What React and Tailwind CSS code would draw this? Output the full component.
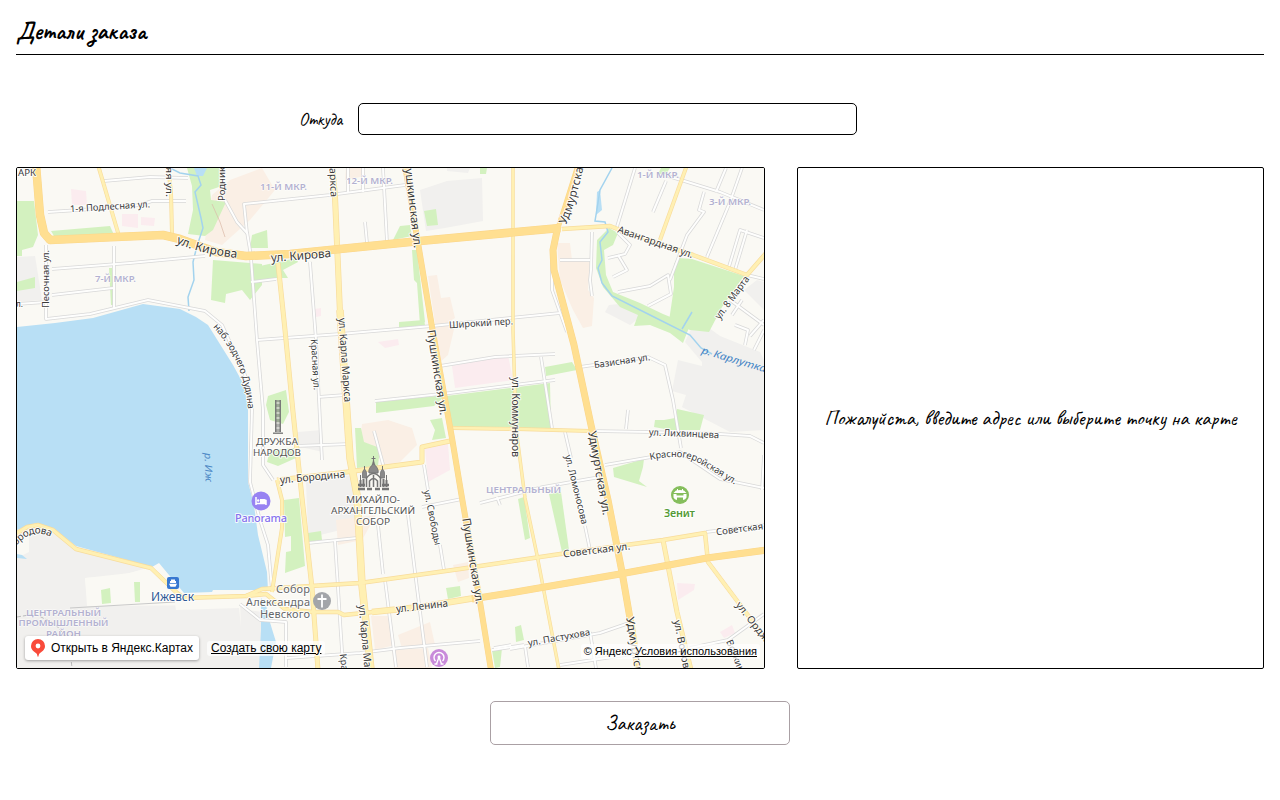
import React from "react";

const GREEN = "#d3f1bf";
const GREY = "#f1f0ee";
const PEACH = "#faefe5";
const PINK = "#fbecef";
const WATER = "#b8dff5";

const areas = [
  // industrial and built-up blocks
  [GREY, "17,257 35,256 36,262 42,300 17,302"],
  [GREY, "420,190 447,181 482,178 483,221 445,228 426,231"],
  [GREY, "447,168 470,168 468,173 447,171"],
  [GREY, "609,305 628,303 643,315 630,325 605,312"],
  [GREY, "693,325 702,323 720,336 760,352 764,360 764,430 730,432 682,407 686,395 672,391 678,360 702,366 702,362 685,342"],
  [GREY, "744,290 757,280 764,282 764,310"],
  [GREY, "298,432 322,430 323,452 296,446"],
  [GREY, "306,482 352,475 357,526 320,535 308,534"],
  [GREY, "17,532 40,525 76,548 150,567 130,573 85,578 88,606 240,605 248,610 262,612 262,668 17,668"],
  ["#faf9f4", "85,578 117,576 150,568 172,594 172,603 87,606"],
  ["#faf9f4", "175,604 240,602 241,627 239,608 176,610"],
  ["#faf9f4", "17,540 29,536 29,552 17,558"],
  // neighbourhood tints
  [PEACH, "212,195 230,180 262,168 275,190 250,220 222,245 205,240"],
  [PEACH, "428,276 437,275 441,298 450,297 455,318 436,330"],
  [PEACH, "557,243 570,243 572,260 590,262 588,290 594,298 592,326 583,328 573,310 560,280"],
  [PEACH, "362,424 388,420 412,428 417,445 400,462 384,466 372,445 360,442"],
  [PEACH, "336,520 376,515 362,540 338,545"],
  [PEACH, "453,565 468,562 469,578 458,582"],
  [PEACH, "371,616 390,616 395,645 375,650"],
  [PEACH, "398,635 430,622 435,645 402,648"],
  [PEACH, "392,650 428,648 432,668 394,668"],
  [PEACH, "434,325 455,325 448,355 437,365"],
  [PEACH, "346,168 364,168 365,176 345,180"],
  [PINK, "71,189 86,191 87,205 72,205"],
  [PINK, "122,214 138,214 138,228 122,226"],
  [PINK, "141,217 155,218 154,226 141,225"],
  [PINK, "452,366 508,355 513,380 455,388"],
  [PINK, "378,342 398,339 399,345 385,348"],
  [PINK, "425,449 448,444 450,470 428,482"],
  [PINK, "677,583 695,584 694,590 678,600"],
  [PINK, "720,632 732,625 735,633 724,638"],
  [PINK, "315,309 321,308 321,316 316,317"],
  // parks
  [GREEN, "17,201 34,201 38,235 33,247 22,250 22,256 17,256"],
  [GREEN, "17,282 35,277 35,288 17,291"],
  [GREEN, "51,231 110,226 114,235 54,236"],
  [GREEN, "187,168 220,168 222,186 210,190 211,200 226,202 213,230 205,236 188,234 193,210 192,186"],
  [GREEN, "213,260 262,264 262,285 250,300 242,290 226,294 225,303 211,300"],
  [GREEN, "252,235 267,230 268,248 250,248"],
  [GREEN, "260,266 296,258 298,262 283,270 288,278 275,278 260,280"],
  [GREEN, "109,268 112,268 115,305 111,305"],
  [GREEN, "400,226 410,225 412,236 393,240"],
  [GREEN, "412,250 417,250 425,322 420,325 417,283 414,280"],
  [GREEN, "424,211 436,209 438,225 427,226"],
  [GREEN, "480,168 487,168 486,174 480,174"],
  [GREEN, "661,168 670,168 666,174 658,174"],
  [GREEN, "609,228 618,233 613,245 604,250 606,275 613,292 640,303 663,314 690,325 683,343 670,333 650,325 634,326 638,315 620,307 603,287 596,268 597,240"],
  [GREEN, "678,258 692,259 744,276 722,307 709,332 690,330 669,321 674,287 674,264"],
  [GREEN, "399,322 424,320 425,325 399,328"],
  [GREEN, "268,396 286,390 289,412 283,424 270,420 266,405"],
  [GREEN, "270,450 294,448 296,458 278,466 267,462"],
  [GREEN, "355,428 361,428 364,442 380,448 378,466 357,468"],
  [GREEN, "376,402 446,395 434,406 376,413"],
  [GREEN, "446,396 550,383 551,428 451,428"],
  [GREEN, "430,420 442,418 446,438 432,440 435,430"],
  [GREEN, "545,367 572,362 577,370 546,376"],
  [GREEN, "664,420 675,418 677,409 704,415 700,430 670,430 654,427 655,420"],
  [GREEN, "613,468 644,459 643,467 639,481 647,487 614,477"],
  [GREEN, "284,500 299,498 305,566 285,573 286,552 291,551 291,536 285,537"],
  [GREEN, "308,533 321,531 322,540 308,542"],
  [GREEN, "446,588 460,586 461,596 448,599"],
  [GREEN, "518,499 524,497 530,538 525,540"],
  [GREEN, "549,494 561,492 569,550 562,552"],
  [GREEN, "101,590 110,588 111,603 102,604"],
  [GREEN, "134,582 140,582 140,602 135,602"],
  [GREEN, "515,627 521,625 524,640 516,642"],
  [GREEN, "492,650 502,648 500,667 495,668"],
  // water
  [WATER, "17,327 55,323 93,318 143,304 180,309 196,317 208,325 233,365 244,385 248,408 248,482 254,505 258,535 267,572 268,590 213,590 212,592 184,593 159,563 152,567 76,546 53,529 36,523 17,530"],
  [WATER, "261,598 266,604 268,616 276,642 271,668 259,668 261,630"],
  [WATER, "17,554 22,555 27,559 17,558"],
  [WATER, "194,168 207,168 203,176 197,176"],
  [WATER, "597,192 600,190 602,210 596,215"],
];

const lanes = [
  "48,212 95,209 140,205 152,201 186,201", "104,181 150,177 188,178",
  "46,245 46,319 90,314 148,300 205,311 222,325 245,375 252,410 250,482 260,520 268,545 272,590",
  "52,269 130,263 205,256", "52,295 113,288", "114,246 114,308", "17,304 46,302",
  "225,200 237,222 247,233 244,204 330,195 405,185", "247,232 251,256",
  "251,258 257,340 263,410 263,465 273,480",
  "251,282 276,279", "257,340 340,334 432,326 510,318 560,313",
  "348,168 348,192", "363,168 363,192", "383,168 387,242", "365,222 367,243",
  "310,262 316,340 322,460", "318,397 345,395", "296,446 350,444",
  "375,401 450,393 555,380", "440,366 495,357 555,354", "541,357 552,428",
  "374,431 384,468", "424,465 428,490", "407,507 416,580 427,667", "378,525 383,574", "385,580 396,667",
  "440,545 444,570", "335,541 343,667", "308,543 357,538", "287,658 360,653 400,648 480,641",
  "422,507 462,499", "480,503 543,487 600,477", "497,497 500,505",
  "580,367 648,357 665,365 673,400 681,448", "628,410 626,429",
  "593,431 650,432 720,434 750,436 764,443", "605,465 680,452 720,479 764,488",
  "565,432 571,458", "585,526 590,550", "552,255 552,290 567,332",
  "592,232 591,270 590,280 592,296", "560,260 590,260",
  "635,168 616,230", "618,233 630,245 625,254 608,258", "618,255 627,270 613,277",
  "618,292 650,286 668,275 671,294 648,306", "670,280 687,235 704,212 699,210 704,192",
  "666,181 653,212", "668,176 720,192 764,210", "726,168 716,192", "742,168 730,202 707,257",
  "764,238 740,230 728,270", "747,230 735,270", "747,275 764,279", "730,300 764,325", "742,300 732,315",
  "764,320 750,336", "735,325 748,330 745,345", "764,330 754,350",
  "706,532 764,525", "510,649 600,633 632,622", "590,632 596,668", "560,665 645,652",
  "690,648 728,640 764,614", "525,646 528,667", "494,648 511,645", "492,650 524,645",
  "240,604 260,620 286,622 286,667", "764,455 762,490",
];

const minor = [
  ["98,165 119,236", 4], ["168,165 171,193 172,234", 4], ["687,165 660,240", 4],
  ["513,165 513,330 516,428 525,498 537,555 559,670", 3.5],
  ["278,263 285,330 293,412 302,498 312,588 318,670", 5],
  ["14,535 27,527 38,525 53,530 76,549 151,568 176,592 184,598 246,596 262,589 360,583 460,569 567,553 663,540 705,533 708,562 738,602 768,642", 4.5],
  ["246,596 266,594 285,609 313,612 338,612 344,615 373,612", 4.5],
  ["372,612 420,607 475,598", 6.5],
  ["663,540 677,612 691,670", 5],
  ["562,229 610,226 620,230 693,255 747,275 767,252", 4.5],
  ["453,428 517,429 590,431", 4], ["277,480 347,472 422,462 422,447 450,441", 5],
  ["277,480 282,500 282,528 272,592", 4],
  ["332,165 335,197 340,313", 6], ["340,310 350,458 357,495 362,585 371,670", 7.5],
];

const major = [
  ["36,165 40,215 44,233 50,240 116,237 163,235 180,239 216,252 246,256 290,254 420,241 560,228", 8.5],
  ["578,165 567,200 558,228", 5], ["558,226 553,250 554,270 561,296 574,345 591,425 608,500 622,572 632,630 638,670", 7],
  ["405,165 417,237 432,327 452,438 462,498 480,602 491,670", 6],
  ["472,599 510,593 620,574 707,558 767,550", 7],
];

const streets = [
  ["1-я Подлесная ул.", 70, 209, 150, 204, 9.5], ["няя ул.", 169, 160, 169, 197, 9.5],
  ["Родник", 222, 201, 222, 167, 9.5], ["ул. Кирова", 271, 258, 331, 253, 12],
  ["Песочная ул.", 46, 308, 46, 250, 9.5], ["л.", 16, 304, 23, 304, 9.5], ["АРК", 18, 173, 36, 173, 9.5],
  ["аркса", 333, 168, 334, 197, 10], ["Пушкинская ул.", 408, 160, 418, 248, 11.5],
  ["Широкий пер.", 449, 325, 513, 321, 9.5], ["Авангардная ул.", 618, 229, 693, 255, 10],
  ["ул. 8 Марта", 717, 318, 747, 277, 10], ["ул. Карла Маркса", 342, 318, 348, 402, 10.5],
  ["Красная ул.", 314, 339, 317, 390, 9.5], ["Пушкинская ул.", 431, 330, 444, 415, 11.5],
  ["ул. Коммунаров", 516, 377, 516, 457, 10.5], ["Базисная ул.", 594, 365, 650, 357, 9.5],
  ["ул. Лихвинцева", 649, 432, 719, 435, 9.5], ["Удмуртская ул.", 592, 431, 607, 515, 11.5],
  ["ул. Ломоносова", 568, 455, 585, 524, 9.5], ["ул. Свободы", 427, 490, 438, 545, 9.5],
  ["Пушкинская ул.", 466, 518, 480, 604, 11.5], ["ул. Бородина", 280, 480, 345, 474, 10.5],
  ["ул. Ленина", 396, 609, 448, 603, 10.5], ["Советская ул.", 563, 554, 630, 546, 10],
  ["Советская", 716, 532, 763, 526, 9.5], ["ул. Пастухова", 528, 643, 590, 632, 9.5],
  ["Удмуртск", 630, 617, 639, 673, 11], ["ул. Воровск", 677, 620, 689, 679, 10],
  ["ул. Ордж", 738, 603, 767, 640, 10], ["ул. Карла Маркса", 362, 605, 370, 689, 10.5],
  ["Красн", 343, 654, 346, 680, 9.5], ["Воткин", 729, 640, 742, 672, 9.5],
];

const curved = [
  ["c1", "M176,243 Q204,255 238,258", "ул. Кирова", 12, 63],
  ["c2", "M566,225 Q577,198 584,165", "Удмуртска", 11.5, 60],
  ["c3", "M213,327 Q245,362 248,410", "наб. зодчего Дудина", 9.5, 91],
  ["c4", "M650,460 Q681,453 697,462 T735,485", "Красногеройская ул.", 9.5, 92],
  ["c5", "M14,549 Q30,526 51,537", "городова", 10, 43],
];

const districts = [
  ["11-Й МКР.", 283.5, 186, 47], ["12-Й МКР.", 369.5, 180, 47], ["7-Й МКР.", 115.5, 278, 41],
  ["1-Й МКР.", 658, 174, 42], ["3-Й МКР.", 730, 201, 42], ["ЦЕНТРАЛЬНЫЙ", 523.5, 489, 75],
  ["ЦЕНТРАЛЬНЫЙ", 63.5, 612, 75], ["ПРОМЫШЛЕННЫЙ", 63.5, 622.5, 90], ["РАЙОН", 63.5, 633.5, 35],
];

const landmarks = [
  ["ДРУЖБА", 277, 442, 42], ["НАРОДОВ", 277, 453, 48], ["МИХАЙЛО-", 373, 500, 54],
  ["АРХАНГЕЛЬСКИЙ", 373, 510.5, 84], ["СОБОР", 373, 521.5, 34],
];

function Line({ points, color, width }) {
  return <polyline points={points} fill="none" stroke={color} strokeWidth={width} strokeLinejoin="round" />;
}

function StreetLabel({ item, fill = "#3a3a3a", italic = false }) {
  const [text, x1, y1, x2, y2, size] = item;
  const length = Math.hypot(x2 - x1, y2 - y1);
  const angle = (Math.atan2(y2 - y1, x2 - x1) * 180) / Math.PI;
  return (
    <text
      transform={`translate(${x1} ${y1}) rotate(${angle})`}
      dy="0.34em"
      fontSize={size}
      textLength={length}
      lengthAdjust="spacingAndGlyphs"
      fontStyle={italic ? "italic" : "normal"}
      fill={fill}
    >
      {text}
    </text>
  );
}

function CityMap() {
  return (
    <svg className="block h-full w-full" viewBox="17 168 747 500" fontFamily="'Noto Sans', 'Open Sans', sans-serif">
      <rect x="17" y="168" width="747" height="500" fill="#faf9f4" />
      {areas.map(([fill, points], i) => <polygon key={i} points={points} fill={fill} />)}
      <g fill="none" stroke="#a3d3ee" strokeWidth="1.5">
        <path d="M168 167L180 173L198 176L201 185L195 192L201 218L203 228L197 246L193 262L194 280L188 297L189 311" />
        <path d="M612 168L600 190L596 215L595 221L605 222L608 232L600 242L602 260L598 268L602 283L612 296L650 315L690 335L701 348L712 354M682 329L692 312" />
      </g>
      <path d="M212 204L220 222L225 237" fill="none" stroke="#dbb9a7" strokeWidth=".7" />
      <path d="M17 617L35 614L55 624L69 640L72 668" fill="none" stroke="#bbb" strokeWidth="1" strokeDasharray="4 2" />
      <path d="M70 608L175 602" stroke="#c9c9c9" strokeWidth="1" />
      {lanes.map((p) => <Line key={p} points={p} color="#d8d8d8" width={3.5} />)}
      {lanes.map((p) => <Line key={p} points={p} color="#fefefd" width={2} />)}
      {minor.map(([p, w]) => <Line key={p} points={p} color="#f8dc9c" width={w} />)}
      {minor.map(([p, w]) => <Line key={p} points={p} color="#fff0b3" width={w - 1.3} />)}
      {major.map(([p, w]) => <Line key={p} points={p} color="#fbd68a" width={w} />)}
      {major.map(([p, w]) => <Line key={p} points={p} color="#ffdf91" width={w - 1} />)}

      <g stroke="#ffffff" strokeOpacity=".85" strokeWidth="2" strokeLinejoin="round" paintOrder="stroke">
        {streets.map((s, i) => <StreetLabel key={i} item={s} />)}
        {curved.map(([id, d, text, size, length]) => (
          <g key={id}>
            <path id={id} d={d} fill="none" stroke="none" />
            <text fontSize={size} fill="#3a3a3a">
              <textPath href={`#${id}`} textLength={length}>{text}</textPath>
            </text>
          </g>
        ))}
        {districts.map(([text, x, y, length], i) => (
          <text key={i} x={x - length / 2} y={y + 3.5} fontSize="9.3" fontWeight="600" textLength={length} lengthAdjust="spacingAndGlyphs" fill="#b3b1d0" strokeWidth="1">{text}</text>
        ))}
        {landmarks.map(([text, x, y, length]) => (
          <text key={text} x={x - length / 2} y={y + 3.2} fontSize="9.3" textLength={length} lengthAdjust="spacingAndGlyphs" fill="#555555">{text}</text>
        ))}
        <g fontSize="11" fill="#66686b">
          <text x="276" y="593" textLength="34">Собор</text>
          <text x="246" y="605.5" textLength="64">Александра</text>
          <text x="260" y="618" textLength="50">Невского</text>
        </g>
        <text x="235" y="521.5" fontSize="11" fontWeight="500" textLength="52" fill="#8673ed">Panorama</text>
        <text x="151" y="601" fontSize="12" textLength="43" fill="#2e5895">Ижевск</text>
        <text x="664" y="516.5" fontSize="11" fontWeight="600" textLength="31" fill="#539a36">Зенит</text>
      </g>
      <StreetLabel item={["р. Карлутка", 702, 350, 766, 369, 10]} fill="#4384c5" italic />
      <StreetLabel item={["р. Иж", 208, 453, 209, 482, 10]} fill="#4f8ac6" italic />

      {/* friendship column */}
      <g fill="#797979">
        <rect x="275" y="400" width="1.5" height="32" /><rect x="279.5" y="400" width="1.5" height="32" />
        <path d="M276 400h4v32h-4z" opacity=".6" />
        <path d="M276.5 403h3M276.5 408h3M276.5 413h3M276.5 418h3M276.5 423h3M276.5 428h3" stroke="#faf9f4" strokeWidth="1" />
        <path d="M273 432.5h10v1.400h-10z" />
      </g>
      {/* cathedral */}
      <g fill="none" stroke="#757575">
        <path d="M373.500 456v6M371.500 458.500h4" strokeWidth="1" />
        <path d="M373.500 460l1.500 5h-3z" fill="#757575" strokeWidth=".5" />
        <path d="M369 473q-1-5 4.500-9q5.500 4 4.500 9z" fill="#8a8a8a" strokeWidth="1" />
        <path d="M364.500 466v5M382.500 466v5M360.500 475v5M386.500 475v5" strokeWidth="1" />
        <path d="M362.500 473q0-2 2-4q2 2 2 4v5h-4zM380.500 473q0-2 2-4q2 2 2 4v5h-4z" fill="#8a8a8a" strokeWidth=".8" />
        <path d="M366.500 487v-9q7-9 14 0v9M369.500 487v-6q4-5 8 0v6M373.500 475v12" strokeWidth="1.500" />
        <path d="M360.500 480v7M363.500 479v8M383.500 479v8M386.500 480v7" strokeWidth="2" />
        <path d="M358 489h7M367 489h5M375 489h5M382 489h7M358 485h7M382 485h7" strokeWidth="2.500" />
      </g>
      {/* hotel */}
      <circle cx="261" cy="501" r="9.500" fill="#9883f2" />
      <path d="M256 497v8M256 503.500h10v1.500M266 503v-2.500h-6" fill="none" stroke="#fff" strokeWidth="1.500" />
      <path d="M260 499h4.500q1.500 0 1.500 2v2h-6z" fill="#fff" /><circle cx="258.200" cy="500.500" r="1.200" fill="#fff" />
      {/* river port */}
      <rect x="167" y="577" width="12" height="12" rx="2" fill="#3878d1" />
      <path d="M171 579.500h4v1.500h1v2h-6v-2h1zM169 583.800h8l-1.500 3h-5z" fill="#fff" />
      {/* stadium */}
      <circle cx="680" cy="495" r="9" fill="#85be5c" />
      <path d="M676 490.500q4-1 8 0l2.500 2.500h-13zM673.500 494h3v1.500h7V494h3v3.500q-1 2-3.500 2.500v-2.500h-6v2.500q-2.500-.5-3.500-2.500z" fill="#fff" />
      <path d="M677.500 489v4M682.500 489v4" stroke="#fff" strokeWidth="1" fill="none" />
      {/* church */}
      <circle cx="322" cy="601" r="9" fill="#a3a5a9" />
      <path d="M322 594.500v13M317.500 599h9" stroke="#fff" strokeWidth="1.800" />
      {/* amusement park */}
      <circle cx="439" cy="658" r="9" fill="#c98bda" />
      <path d="M435.500 661a5 5 0 1 1 7 0M436.500 664l2.500-7 2.500 7M434.500 664h3M440.500 664h3" fill="none" stroke="#fff" strokeWidth="1.400" />
      <circle cx="439" cy="657" r="1.500" fill="#fff" />
    </svg>
  );
}

function Pin() {
  return (
    <svg className="h-[18px] w-[14px] shrink-0" viewBox="0 0 14 18">
      <path d="M7 0a7 7 0 0 0-7 7c0 4 3 5.500 5.500 7.500C6.200 15.200 6.500 18 7 18s.8-2.800 1.500-3.500C11 12.500 14 11 14 7a7 7 0 0 0-7-7z" fill="#f94b3b" />
      <circle cx="7" cy="7" r="2.400" fill="#fff" />
    </svg>
  );
}

// Each word is shaped on its own, so letter variants restart at every word.
function Words({ text }) {
  return text.split(" ").map((word, i) => (
    <React.Fragment key={i}>
      {i > 0 && " "}
      <span className="inline-block">{word.replace(",", "")}</span>
      {word.endsWith(",") && ","}
    </React.Fragment>
  ));
}

export default function App() {
  return (
    <main className="h-[800px] overflow-hidden bg-white px-4 font-[Caveat,'Liberation_Serif',serif] text-black">
      <header className="flex h-[55px] items-center border-b border-black pt-2">
        <h1 className="text-[24px] leading-none font-bold whitespace-nowrap"><Words text="Детали заказа" /></h1>
      </header>

      <div className="mt-12 ml-[283px] flex h-8 items-center">
        <label htmlFor="from" className="w-[59px] text-[17.6px] whitespace-nowrap">Откуда</label>
        <input id="from" className="h-8 w-[499px] rounded-[5px] border border-black px-2 outline-none" />
      </div>

      <div className="mt-8 flex h-[502px] gap-8">
        <section className="relative w-[749px] shrink-0 overflow-hidden rounded-[2px] border border-black font-['Liberation_Sans',sans-serif]">
          <CityMap />
          <div className="absolute bottom-2 left-2 flex items-center gap-2">
            <a className="flex h-6 w-[174px] items-center gap-1.5 rounded-[3px] bg-white pl-1.5 text-[12px] whitespace-nowrap shadow-[0_1px_3px_rgba(0,0,0,0.35)]">
              <Pin />
              Открыть в Яндекс.Картах
            </a>
            <a className="rounded-[3px] bg-white/70 px-1 text-[12px] leading-[15px] whitespace-nowrap underline">Создать свою карту</a>
          </div>
          <div className="absolute right-1 bottom-[9px] rounded-[3px] bg-white/70 px-[3px] text-[11px] leading-[15px] whitespace-nowrap">
            © Яндекс <a className="underline">Условия использования</a>
          </div>
        </section>
        <section className="flex w-[467px] items-center justify-center rounded-[2px] border border-black">
          <p className="pt-0.5 text-[20.8px] whitespace-nowrap"><Words text="Пожалуйста, введите адрес или выберите точку на карте" /></p>
        </section>
      </div>

      <div className="mt-8 flex justify-center">
        <button className="h-11 w-[300px] rounded-[5px] border border-[#aaa0a4] pt-px text-[20.8px]">Заказать</button>
      </div>
    </main>
  );
}
